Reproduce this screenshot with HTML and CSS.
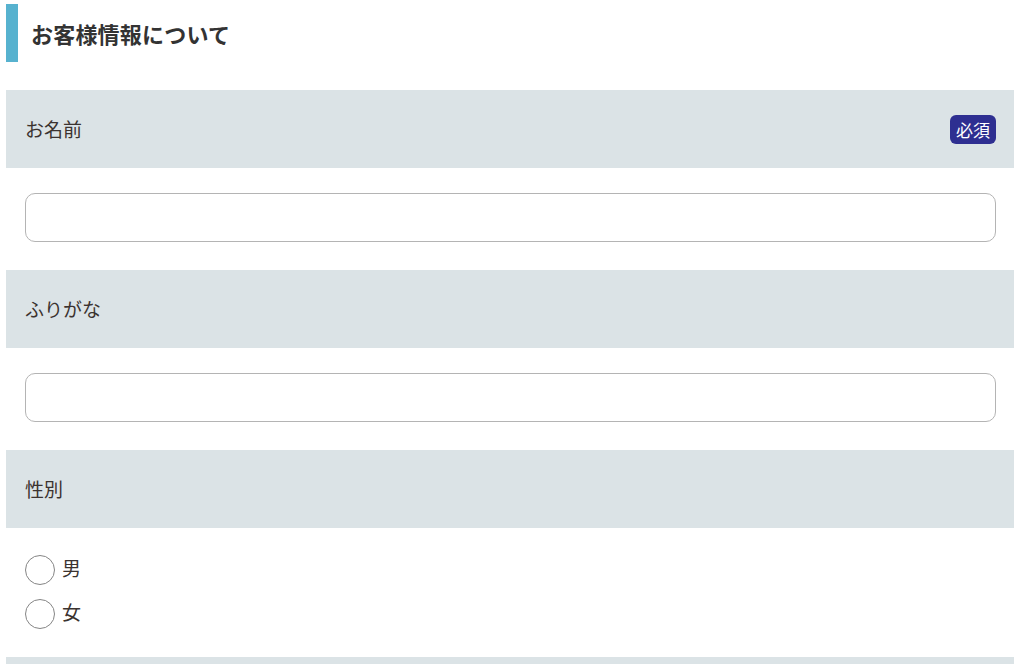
FILE: index.html
```html
<!DOCTYPE html>
<html lang="ja">
<head>
<meta charset="utf-8">
<link rel="stylesheet" href="styles.css">
</head>
<body>
<div class="page">
  <h2 class="heading">お客様情報について</h2>
  <div class="row">
    <span class="label">お名前</span>
    <span class="badge">必須</span>
  </div>
  <div class="field"><input class="text-input" type="text"></div>
  <div class="row">
    <span class="label">ふりがな</span>
  </div>
  <div class="field"><input class="text-input" type="text"></div>
  <div class="row">
    <span class="label">性別</span>
  </div>
  <div class="field radios">
    <label class="radio"><span class="circle"></span><span class="radio-text">男</span></label>
    <label class="radio"><span class="circle"></span><span class="radio-text">女</span></label>
  </div>
  <div class="row"></div>
</div>
</body>
</html>
```
FILE: styles.css
```css
* { box-sizing: border-box; }
html, body { margin: 0; padding: 0; background: #fff; }
body {
  font-family: "Noto Sans CJK JP", "Noto Sans", sans-serif;
  color: #3b3330;
}
.page {
  padding: 4px 10px 0 6px;
}
.heading {
  margin: 0 0 28px 0;
  height: 58px;
  border-left: 12px solid #57b2cf;
  padding-left: 13px;
  display: flex;
  align-items: center;
  font-size: 22px;
  font-weight: 700;
  color: #333;
  letter-spacing: 0.2px;
  line-height: 1;
}
.row {
  height: 78px;
  background: #dbe3e6;
  display: flex;
  align-items: center;
  justify-content: space-between;
  padding: 0 18px 2px 19px;
}
.label {
  font-size: 19px;
  line-height: 1;
}
.badge {
  background: #2e2f91;
  color: #fff;
  font-size: 17px;
  line-height: 29px;
  height: 29px;
  padding: 0 6px;
  border-radius: 6px;
  margin-top: 2px;
}
.field {
  padding: 25px 18px 28px 19px;
}
.text-input {
  display: block;
  width: 100%;
  height: 49px;
  border: 1.5px solid #b4b4b4;
  border-radius: 10px;
  background: #fff;
  outline: none;
}
.radios {
  padding-top: 27px;
  display: flex;
  flex-direction: column;
  gap: 14px;
}
.radio {
  display: flex;
  align-items: center;
  gap: 7px;
  font-size: 19px;
  line-height: 1;
  height: 30px;
}
.radio-text {
  position: relative;
  top: -3px;
}
.circle {
  width: 30px;
  height: 30px;
  border: 1.5px solid #858585;
  border-radius: 50%;
  background: #fff;
}
```
